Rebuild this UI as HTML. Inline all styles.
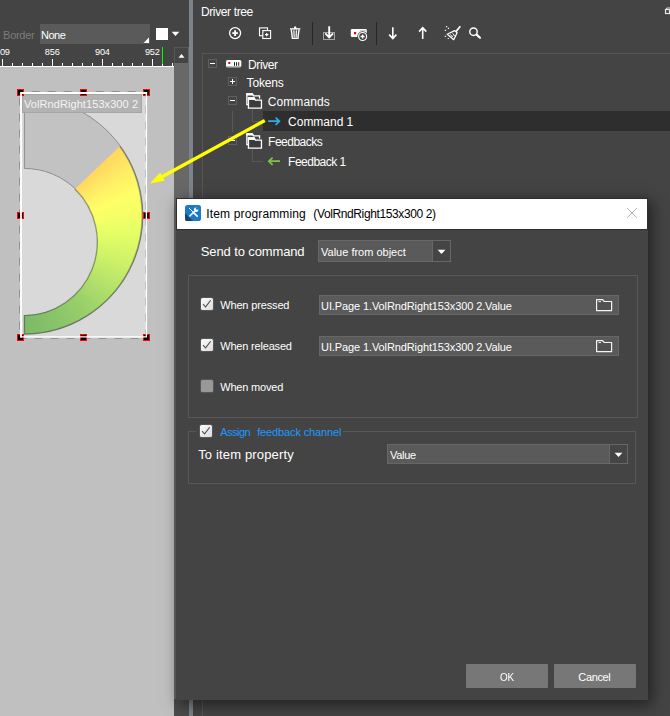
<!DOCTYPE html>
<html>
<head>
<meta charset="utf-8">
<title>Item programming</title>
<style>
html,body{margin:0;padding:0;}
html{width:670px;height:716px;overflow:hidden;}
body{width:670px;height:716px;overflow:hidden;position:relative;background:#444444;font-family:"Liberation Sans",sans-serif;font-size:12px;color:#fff;}
.abs{position:absolute;}
.t{position:absolute;white-space:nowrap;line-height:1;}
/* left panel */
#canvas{left:0;top:67px;width:174px;height:649px;background:#c0c0c0;}
#vscroll{left:174px;top:47px;width:15px;height:669px;background:#686868;}
#vscrollbtn{left:174px;top:47px;width:14px;height:16px;background:#454545;box-sizing:border-box;border:1px solid #565656;border-right:none;border-bottom:none;}
#splitter{left:189px;top:0;width:4px;height:716px;background:#7d828c;}
#combo1{left:40px;top:24px;width:110px;height:20px;background:#5a5a5a;}
#swatch{left:156px;top:28px;width:12px;height:12px;background:#fff;}
/* tree */
#treebox{left:202px;top:53px;width:468px;height:663px;border-left:1px solid #565656;border-top:1px solid #565656;box-sizing:border-box;}
#selrow{left:263px;top:111px;width:407px;height:20px;background:#2e2e2e;}
.exp{position:absolute;width:9px;height:9px;box-sizing:border-box;border:1px solid #5e5e5e;}
.exp i{position:absolute;left:1px;top:3px;width:5px;height:1px;background:#fff;}
.exp b{position:absolute;left:3px;top:1px;width:1px;height:5px;background:#fff;}
.tl{position:absolute;background:#585858;}
/* dialog */
#dlgshadow{left:176px;top:198px;width:472px;height:502px;box-shadow:3px 4px 14px 1px rgba(0,0,0,0.5);background:#444444;}
#dlg{left:177px;top:199px;width:470px;height:500px;background:#444444;}
#title{left:0;top:0;width:470px;height:30px;background:#fff;}
.grp{position:absolute;box-sizing:border-box;border:1px solid #585858;}
.inp{position:absolute;box-sizing:border-box;border:1px solid #676767;background:#5a5a5a;}
.cb{position:absolute;width:12px;height:12px;border-radius:1.5px;background:linear-gradient(135deg,#fcfcfc,#dcdcdc);box-shadow:0 0 0 1px rgba(255,255,255,0.10);}
.btn{position:absolute;background:#777777;height:24px;width:82px;border-radius:1px;}
</style>
</head>
<body>
<!-- ===== left panel ===== -->
<div class="abs" id="canvas"></div>
<div class="abs" id="vscroll"></div>
<div class="abs" id="vscrollbtn"></div>
<div class="abs" style="left:174px;top:699px;width:15px;height:17px;background:#4b4b4b;"></div>
<div class="abs" id="splitter"></div>
<div class="abs" id="combo1"></div>
<div class="abs" id="swatch"></div>
<!--LEFT-->
<div class="t" style="left:3.10px;top:30.29px;font-size:11px;color:#7c7c7c;letter-spacing:-0.284px;">Border</div>
<div class="t" style="left:40.90px;top:30.29px;font-size:11px;color:#fff;letter-spacing:-0.433px;">None</div>
<svg class="abs" style="left:143px;top:37px" width="7" height="7"><path d="M6 0.5V6H0.5Z" fill="#fff"/></svg>
<svg class="abs" style="left:171px;top:31px" width="9" height="6"><path d="M0.7 0.8H8.3L4.5 5Z" fill="#fff"/></svg>
<svg class="abs" style="left:0;top:47px" width="174" height="20"><rect x="2.0" y="12" width="1" height="8" fill="#fff"/><rect x="12.0" y="16" width="1" height="4" fill="#fff"/><rect x="22.0" y="16" width="1" height="4" fill="#fff"/><rect x="32.0" y="16" width="1" height="4" fill="#fff"/><rect x="42.0" y="16" width="1" height="4" fill="#fff"/><rect x="52.0" y="12" width="1" height="8" fill="#fff"/><rect x="62.0" y="16" width="1" height="4" fill="#fff"/><rect x="72.0" y="16" width="1" height="4" fill="#fff"/><rect x="82.0" y="16" width="1" height="4" fill="#fff"/><rect x="92.0" y="16" width="1" height="4" fill="#fff"/><rect x="102.0" y="12" width="1" height="8" fill="#fff"/><rect x="112.0" y="16" width="1" height="4" fill="#fff"/><rect x="122.0" y="16" width="1" height="4" fill="#fff"/><rect x="132.0" y="16" width="1" height="4" fill="#fff"/><rect x="142.0" y="16" width="1" height="4" fill="#fff"/><rect x="152.0" y="12" width="1" height="8" fill="#fff"/><rect x="162.0" y="16" width="1" height="4" fill="#fff"/><rect x="172.0" y="16" width="1" height="4" fill="#fff"/><rect x="0" y="19" width="174" height="1" fill="#fff"/><rect x="162" y="0" width="1" height="17" fill="#00ff00"/></svg>
<div class="t" style="left:-5.00px;top:48.01px;font-size:9.2px;color:#fff;letter-spacing:-0.175px;">809</div>
<div class="t" style="left:44.80px;top:48.01px;font-size:9.2px;color:#fff;letter-spacing:-0.175px;">856</div>
<div class="t" style="left:95.00px;top:48.01px;font-size:9.2px;color:#fff;letter-spacing:-0.175px;">904</div>
<div class="t" style="left:144.90px;top:48.01px;font-size:9.2px;color:#fff;letter-spacing:-0.175px;">952</div>
<svg class="abs" style="left:178px;top:53px" width="8" height="6"><path d="M0.5 4.8L3.5 0.9L6.5 4.8Z" fill="#fff"/></svg>
<div class="abs" style="left:21px;top:93px;width:126px;height:245px;background:#d9d9d9;"></div>
<svg class="abs" style="left:0;top:0" width="174" height="360" viewBox="0 0 174 360">
<defs><clipPath id="objclip"><rect x="21" y="93" width="126" height="245"/></clipPath></defs>
<g clip-path="url(#objclip)">
<path d="M24.40 97.00 A118.50 118.50 0 0 1 24.40 334.00 L24.40 315.60 A73.60 73.60 0 0 0 24.40 168.40 Z" fill="#c2c2c2" stroke="#8e8e8e" stroke-width="1"/>
</g></svg>
<div class="abs" id="colring" style="left:0;top:0;width:174px;height:360px;clip-path:path('M119.90 146.30 A118.50 118.50 0 0 1 24.40 334.00 L24.40 315.60 A73.60 73.60 0 0 0 74.90 189.10 Z');background:conic-gradient(from 0deg at 23.6px 238px, #ffd65c 0deg, #ffd65c 46deg, #ffe264 52deg, #fff266 60deg, #fffe66 68deg, #f3ff66 78deg, #e4fd66 88deg, #d2f468 100deg, #c2ea69 111deg, #acdc6a 125deg, #98cf6a 140deg, #8cc66a 155deg, #83bf69 168deg, #7cba69 180deg, #7dbb6a 360deg);"></div>
<svg class="abs" style="left:0;top:0" width="174" height="360" viewBox="0 0 174 360">
<defs><filter id="sb" x="-5%" y="-5%" width="110%" height="110%"><feGaussianBlur stdDeviation="0.55"/></filter></defs>
<path d="M119.90 146.30 A118.50 118.50 0 0 1 24.40 334.00 L24.40 315.60 A73.60 73.60 0 0 0 74.90 189.10" fill="none" stroke="rgba(50,60,35,0.42)" stroke-width="1.4" filter="url(#sb)"/>
<rect x="22" y="94" width="120" height="19" fill="#b3b3b3"/>
<rect x="22.5" y="94.5" width="119" height="18" fill="none" stroke="#a6a6a6" stroke-width="1"/>
<rect x="19.5" y="91.5" width="126" height="247" fill="none" stroke="rgba(0,0,0,0.24)" stroke-width="1" stroke-dasharray="8 8" stroke-dashoffset="4"/>
<rect x="17.5" y="89.5" width="6" height="6" fill="#000" stroke="#ff0000" stroke-width="1"/>
<rect x="80.5" y="89.5" width="6" height="6" fill="#000" stroke="#ff0000" stroke-width="1"/>
<rect x="143.5" y="89.5" width="6" height="6" fill="#000" stroke="#ff0000" stroke-width="1"/>
<rect x="17.5" y="212.5" width="6" height="6" fill="#000" stroke="#ff0000" stroke-width="1"/>
<rect x="143.5" y="212.5" width="6" height="6" fill="#000" stroke="#ff0000" stroke-width="1"/>
<rect x="17.5" y="334.5" width="6" height="6" fill="#000" stroke="#ff0000" stroke-width="1"/>
<rect x="80.5" y="334.5" width="6" height="6" fill="#000" stroke="#ff0000" stroke-width="1"/>
<rect x="143.5" y="334.5" width="6" height="6" fill="#000" stroke="#ff0000" stroke-width="1"/>
<path d="M20.1 91.9H147.1V93.9H21.9V337.6H20.1Z" fill="#fff"/>
<path d="M147.1 91.9V337.6H20.1V336.25H145.7V91.9Z" fill="#fff"/>
</svg>
<div class="t" style="left:24.00px;top:98.69px;font-size:11px;color:#f4f4f4;letter-spacing:0.077px;">VolRndRight153x300 2</div>
<!--/LEFT-->

<!-- ===== driver tree ===== -->
<div class="abs" id="treebox"></div>
<div class="abs" id="selrow"></div>
<!--TREE-->
<div class="t" id="dt" style="left:200.90px;top:6.24px;font-size:12px;color:#fff;letter-spacing:-0.361px;">Driver tree</div>
<svg class="abs" style="left:193px;top:18px" width="477" height="32" viewBox="193 18 477 32"><circle cx="235.1" cy="33.1" r="5.5" fill="none" stroke="#ffffff" stroke-width="1.3"/><path d="M232.3 33.1H237.9M235.1 30.3V35.9" stroke="#ffffff" stroke-width="1.9" fill="none"/><rect x="259.5" y="27.9" width="8" height="7.8" fill="none" stroke="#ffffff" stroke-width="1.1"/><rect x="262.8" y="30.6" width="7.8" height="7.9" fill="#444" stroke="#ffffff" stroke-width="1.1"/><path d="M265 34.6H268.4M266.7 32.9V36.3" stroke="#ffffff" stroke-width="1.1" fill="none"/><path d="M290 28.9H300.3" stroke="#ffffff" stroke-width="1.4" fill="none"/><path d="M293.9 28.4L295.15 26.5L296.4 28.4Z" stroke="#ffffff" stroke-width="1" fill="#ffffff"/><path d="M291.3 29.6L292.4 38.4H297.9L299 29.6" stroke="#ffffff" stroke-width="1.4" fill="none" stroke-linejoin="round"/><path d="M293.9 30.2L294.2 37.6M296.4 30.2L296.1 37.6" stroke="#ffffff" stroke-width="1.2" fill="none"/><rect x="312" y="22" width="1" height="23" fill="#262626"/><rect x="376" y="22" width="1" height="23" fill="#262626"/><rect x="323.5" y="32.5" width="11" height="7" fill="none" stroke="#a2a2a2" stroke-width="1"/><path d="M329.2 26.2V37.2M325.3 33.4L329.2 37.4L333.1 33.4" stroke="#ffffff" stroke-width="1.9" fill="none"/><rect x="350.8" y="29" width="16" height="8" rx="1.3" fill="#ffffff"/><rect x="354" y="32" width="2.2" height="2.2" fill="#e0001a"/><rect x="359.5" y="30.3" width="6.8" height="1" fill="#bdbdbd"/><circle cx="362.6" cy="36.5" r="5.3" fill="#444"/><circle cx="362.6" cy="36.5" r="4" fill="#444" stroke="#ffffff" stroke-width="1.2"/><path d="M360.6 36.5H364.6M362.6 34.5V38.5" stroke="#ffffff" stroke-width="1.3" fill="none"/><path d="M392.8 27.2V38.4M389.2 34.6L392.8 38.6L396.4 34.6" stroke="#ffffff" stroke-width="1.6" fill="none"/><path d="M422.7 39V27.8M419.1 31.6L422.7 27.6L426.3 31.6" stroke="#ffffff" stroke-width="1.6" fill="none"/><path d="M460.4 26.3L455.9 31.6" stroke="#ffffff" stroke-width="1.7" fill="none"/><path d="M454.6 30.6L457.1 32.8L453.7 39.7L447.3 34.2Z" stroke="#ffffff" stroke-width="1.25" fill="none" stroke-linejoin="round"/><path d="M450.4 34.4L452.4 36.9M452.6 33.2L454.8 36.2M451.4 37.6L453.2 35.6" stroke="#ffffff" stroke-width="0.9" fill="none"/><path d="M445.9 25.9h1.3v1.3h-1.3zM447.8 27.8h1.3v1.3h-1.3zM444.8 29.8h1.3v1.3h-1.3zM444.8 35.8h1.3v1.3h-1.3zM447.7 37.9h1.2v1.2h-1.2z" fill="#f4f4f4"/><circle cx="473.5" cy="31.7" r="3.7" fill="none" stroke="#ffffff" stroke-width="1.45"/><path d="M476.6 34.6L480 37.7" stroke="#ffffff" stroke-width="2.1" fill="none" stroke-linecap="round"/></svg>
<svg id="cornericon" class="abs" style="left:664px;top:6px" width="6" height="10" viewBox="0 0 6 10"><path d="M2.6 3.2V2H6" fill="none" stroke="#d8d8d8" stroke-width="1"/><rect x="1.5" y="3.5" width="4" height="4" fill="none" stroke="#e4e4e4" stroke-width="1.2"/></svg>
<div class="exp" style="left:208px;top:59px"><i></i></div>
<div class="exp" style="left:228px;top:77px"><i></i><b></b></div>
<div class="exp" style="left:228px;top:96px"><i></i></div>
<div class="exp" style="left:228px;top:136px"><i></i></div>
<div class="tl" style="left:232px;top:111px;width:1px;height:21px;"></div>
<div class="tl" style="left:252px;top:110px;width:1px;height:12px;"></div>
<div class="tl" style="left:252px;top:121px;width:11px;height:1px;"></div>
<div class="tl" style="left:252px;top:150px;width:1px;height:12px;"></div>
<div class="tl" style="left:252px;top:161px;width:11px;height:1px;"></div>
<svg class="abs" style="left:226px;top:59px" width="16" height="10" viewBox="0 0 16 10"><rect x="0" y="1.1" width="15.3" height="7.2" rx="1.5" fill="#fff"/><rect x="0.2" y="6.9" width="14.9" height="1.4" rx="0.7" fill="#bbb"/><rect x="2.3" y="3" width="2" height="2" fill="#e0001a"/><path d="M8.5 3.2V6.8M10.6 3.2V6.8M12.7 3.2V6.8" stroke="#222" stroke-width="1"/></svg>
<svg class="abs" style="left:245px;top:92px" width="19" height="18" viewBox="0 0 19 18"><path d="M3.4 12.7H1.85V1.85H7.3L8.5 3.85H14.55V6.4" fill="none" stroke="#fff" stroke-width="1.3" stroke-linejoin="miter"/><path d="M1.2 1.2H7.7L9 3.6H1.2Z" fill="#fff"/><path d="M3.45 16.05V5.95H9.1L10.3 8.15H16.45V16.05Z" fill="#3b3b3b" stroke="#fff" stroke-width="1.3" stroke-linejoin="miter"/><path d="M2.8 5.3H9.5L10.8 7.9H2.8Z" fill="#fff"/></svg>
<svg class="abs" style="left:245px;top:132px" width="19" height="18" viewBox="0 0 19 18"><path d="M3.4 12.7H1.85V1.85H7.3L8.5 3.85H14.55V6.4" fill="none" stroke="#fff" stroke-width="1.3" stroke-linejoin="miter"/><path d="M1.2 1.2H7.7L9 3.6H1.2Z" fill="#fff"/><path d="M3.45 16.05V5.95H9.1L10.3 8.15H16.45V16.05Z" fill="#3b3b3b" stroke="#fff" stroke-width="1.3" stroke-linejoin="miter"/><path d="M2.8 5.3H9.5L10.8 7.9H2.8Z" fill="#fff"/></svg>
<svg class="abs" style="left:267px;top:116px" width="14" height="11" viewBox="0 0 14 11"><path d="M1.2 5.2H12.2M8.6 1.6L12.4 5.2L8.6 8.8" fill="none" stroke="#35abe4" stroke-width="1.7"/></svg>
<svg class="abs" style="left:267px;top:156px" width="14" height="11" viewBox="0 0 14 11"><path d="M13 5.2H2M5.6 1.6L1.8 5.2L5.6 8.8" fill="none" stroke="#7fc545" stroke-width="1.7"/></svg>
<div class="t" id="l1" style="left:248.10px;top:58.54px;font-size:12px;color:#fff;letter-spacing:-0.420px;">Driver</div>
<div class="t" id="l2" style="left:246.60px;top:77.14px;font-size:12px;color:#fff;letter-spacing:-0.164px;">Tokens</div>
<div class="t" id="l3" style="left:267.80px;top:95.74px;font-size:12px;color:#fff;letter-spacing:0.078px;">Commands</div>
<div class="t" id="l4" style="left:288.10px;top:115.64px;font-size:12px;color:#fff;letter-spacing:-0.020px;">Command 1</div>
<div class="t" id="l5" style="left:268.10px;top:135.64px;font-size:12px;color:#fff;letter-spacing:-0.513px;">Feedbacks</div>
<div class="t" id="l6" style="left:288.10px;top:156.24px;font-size:12px;color:#fff;letter-spacing:-0.501px;">Feedback 1</div>
<!--/TREE-->

<!--ARROW--><svg class="abs" style="left:0;top:0;" width="670" height="716" viewBox="0 0 670 716"><path d="M264.8 120.5L160.7 177.5" stroke="#ffff00" stroke-width="3.4" fill="none"/><path d="M149.9 183.4L160.2 172.4L164.7 180.7Z" fill="#ffff00"/></svg><!--/ARROW-->
<!-- ===== dialog ===== -->
<div class="abs" id="dlgshadow"></div>
<div class="abs" style="left:176px;top:198px;width:472px;height:32px;background:#2e2e2e;"></div>
<div class="abs" id="dlg">
<div class="abs" id="title"></div>
<!--DLG-->
<svg class="abs" style="left:8px;top:6px" width="16" height="16" viewBox="0 0 16 16"><defs><clipPath id="icc"><rect x="0" y="0" width="16" height="16" rx="2.6"/></clipPath></defs><g clip-path="url(#icc)"><rect width="16" height="16" fill="#1c7ac2"/><path d="M0 8L8 16H0Z" fill="#17466f"/></g><path d="M4.2 3.2L8.2 7.2" stroke="#fff" stroke-width="1" stroke-linecap="round"/><path d="M8.8 7.8L12.2 11.1" stroke="#fff" stroke-width="1.7" stroke-linecap="round"/><path d="M4.9 10.9L9.6 6.3" stroke="#fff" stroke-width="1.5" stroke-linecap="round"/><circle cx="11.1" cy="4.7" r="2.3" fill="#fff"/><circle cx="12.2" cy="3.5" r="1.35" fill="#1c7ac2"/></svg>
<svg class="abs" style="left:449px;top:8px" width="12" height="12" viewBox="0 0 12 12"><path d="M1.2 1.2L10.8 10.8M10.8 1.2L1.2 10.8" stroke="#b4b4b4" stroke-width="1"/></svg>
<div class="abs" style="left:0;top:30px;width:470px;height:1px;background:#2f2f2f;"></div>
<div class="grp" style="left:11px;top:76px;width:450px;height:143px;"></div>
<div class="grp" style="left:11px;top:232px;width:448px;height:53px;"></div>
<div class="abs" style="left:19px;top:231px;width:147px;height:3px;background:#444;"></div>
<div class="inp" style="left:141px;top:41px;width:133px;height:22px;"></div><div class="abs" style="left:255px;top:42px;width:17px;height:20px;background:#454545;border-left:1px solid #676767;"></div><svg class="abs" style="left:260.3px;top:49.8px" width="9" height="6"><path d="M0.6 0.8H8.4L4.5 5.1Z" fill="#fff"/></svg>
<div class="inp" style="left:210px;top:245px;width:241px;height:20px;"></div><div class="abs" style="left:432px;top:246px;width:17px;height:18px;background:#454545;border-left:1px solid #676767;"></div><svg class="abs" style="left:437.3px;top:252.8px" width="9" height="6"><path d="M0.6 0.8H8.4L4.5 5.1Z" fill="#fff"/></svg>
<div class="inp" style="left:142px;top:96px;width:300px;height:20px;"></div>
<svg class="abs" style="left:418px;top:99px" width="18" height="14" viewBox="0 0 18 14"><path d="M1.6 1.6H7.6L9.2 3.5H16.6V12.6H1.6Z" fill="#515151" stroke="#f4f4f4" stroke-width="1.2" stroke-linejoin="round"/><path d="M3.4 3.6H6" stroke="#f4f4f4" stroke-width="1"/></svg>
<div class="inp" style="left:142px;top:137px;width:300px;height:20px;"></div>
<svg class="abs" style="left:418px;top:140px" width="18" height="14" viewBox="0 0 18 14"><path d="M1.6 1.6H7.6L9.2 3.5H16.6V12.6H1.6Z" fill="#515151" stroke="#f4f4f4" stroke-width="1.2" stroke-linejoin="round"/><path d="M3.4 3.6H6" stroke="#f4f4f4" stroke-width="1"/></svg>
<div class="cb" style="left:24px;top:99px;"><svg width="12" height="12" viewBox="0 0 12 12" style="position:absolute;left:0;top:0"><path d="M2 6.2L4.6 8.9L9.7 2.2" fill="none" stroke="#4c4c4c" stroke-width="1.05"/></svg></div>
<div class="cb" style="left:24px;top:140px;"><svg width="12" height="12" viewBox="0 0 12 12" style="position:absolute;left:0;top:0"><path d="M2 6.2L4.6 8.9L9.7 2.2" fill="none" stroke="#4c4c4c" stroke-width="1.05"/></svg></div>
<div class="cb" style="left:24px;top:181px;background:#989898;box-shadow:0 0 0 1px rgba(255,255,255,0.10);"></div>
<div class="cb" style="left:23px;top:226px;"><svg width="12" height="12" viewBox="0 0 12 12" style="position:absolute;left:0;top:0"><path d="M2 6.2L4.6 8.9L9.7 2.2" fill="none" stroke="#4c4c4c" stroke-width="1.05"/></svg></div>
<div class="btn" style="left:289px;top:465px;"></div>
<div class="btn" style="left:377px;top:465px;"></div>
<div class="t" id="tt" style="left:29.30px;top:8.74px;font-size:12px;color:#000;letter-spacing:0.142px;">Item programming</div>
<div class="t" style="left:136.30px;top:8.74px;font-size:12px;color:#000;letter-spacing:-0.379px;">(VolRndRight153x300 2)</div>
<div class="t" id="t1" style="left:23.80px;top:45.80px;font-size:13px;color:#fff;letter-spacing:-0.122px;">Send to command</div>
<div class="t" style="left:144.00px;top:47.59px;font-size:11px;color:#fff;letter-spacing:0.001px;">Value from object</div>
<div class="t" style="left:43.20px;top:100.99px;font-size:11px;color:#fff;letter-spacing:-0.148px;">When pressed</div>
<div class="t" style="left:43.20px;top:141.99px;font-size:11px;color:#fff;letter-spacing:-0.182px;">When released</div>
<div class="t" style="left:43.20px;top:182.99px;font-size:11px;color:#fff;letter-spacing:-0.190px;">When moved</div>
<div class="t" style="left:144.10px;top:102.39px;font-size:11px;color:#fff;letter-spacing:-0.114px;">UI.Page 1.VolRndRight153x300 2.Value</div>
<div class="t" style="left:144.10px;top:143.39px;font-size:11px;color:#fff;letter-spacing:-0.114px;">UI.Page 1.VolRndRight153x300 2.Value</div>
<div class="t" style="left:43.20px;top:227.99px;font-size:11px;color:#1a9bff;letter-spacing:-0.503px;">Assign</div>
<div class="t" style="left:80.20px;top:227.99px;font-size:11px;color:#1a9bff;letter-spacing:-0.136px;">feedback channel</div>
<div class="t" style="left:21.20px;top:248.90px;font-size:13px;color:#fff;letter-spacing:0.153px;">To item property</div>
<div class="t" style="left:213.10px;top:251.39px;font-size:11px;color:#fff;letter-spacing:-0.305px;">Value</div>
<div class="t" style="left:322.60px;top:472.99px;font-size:11px;color:#fff;transform:scaleX(0.9);transform-origin:0 0;letter-spacing:-0.2px;">OK</div>
<div class="t" style="left:401.30px;top:472.99px;font-size:11px;color:#fff;letter-spacing:-0.348px;">Cancel</div>
<!--/DLG-->
</div>
<!--OVER-->
</body>
</html>
